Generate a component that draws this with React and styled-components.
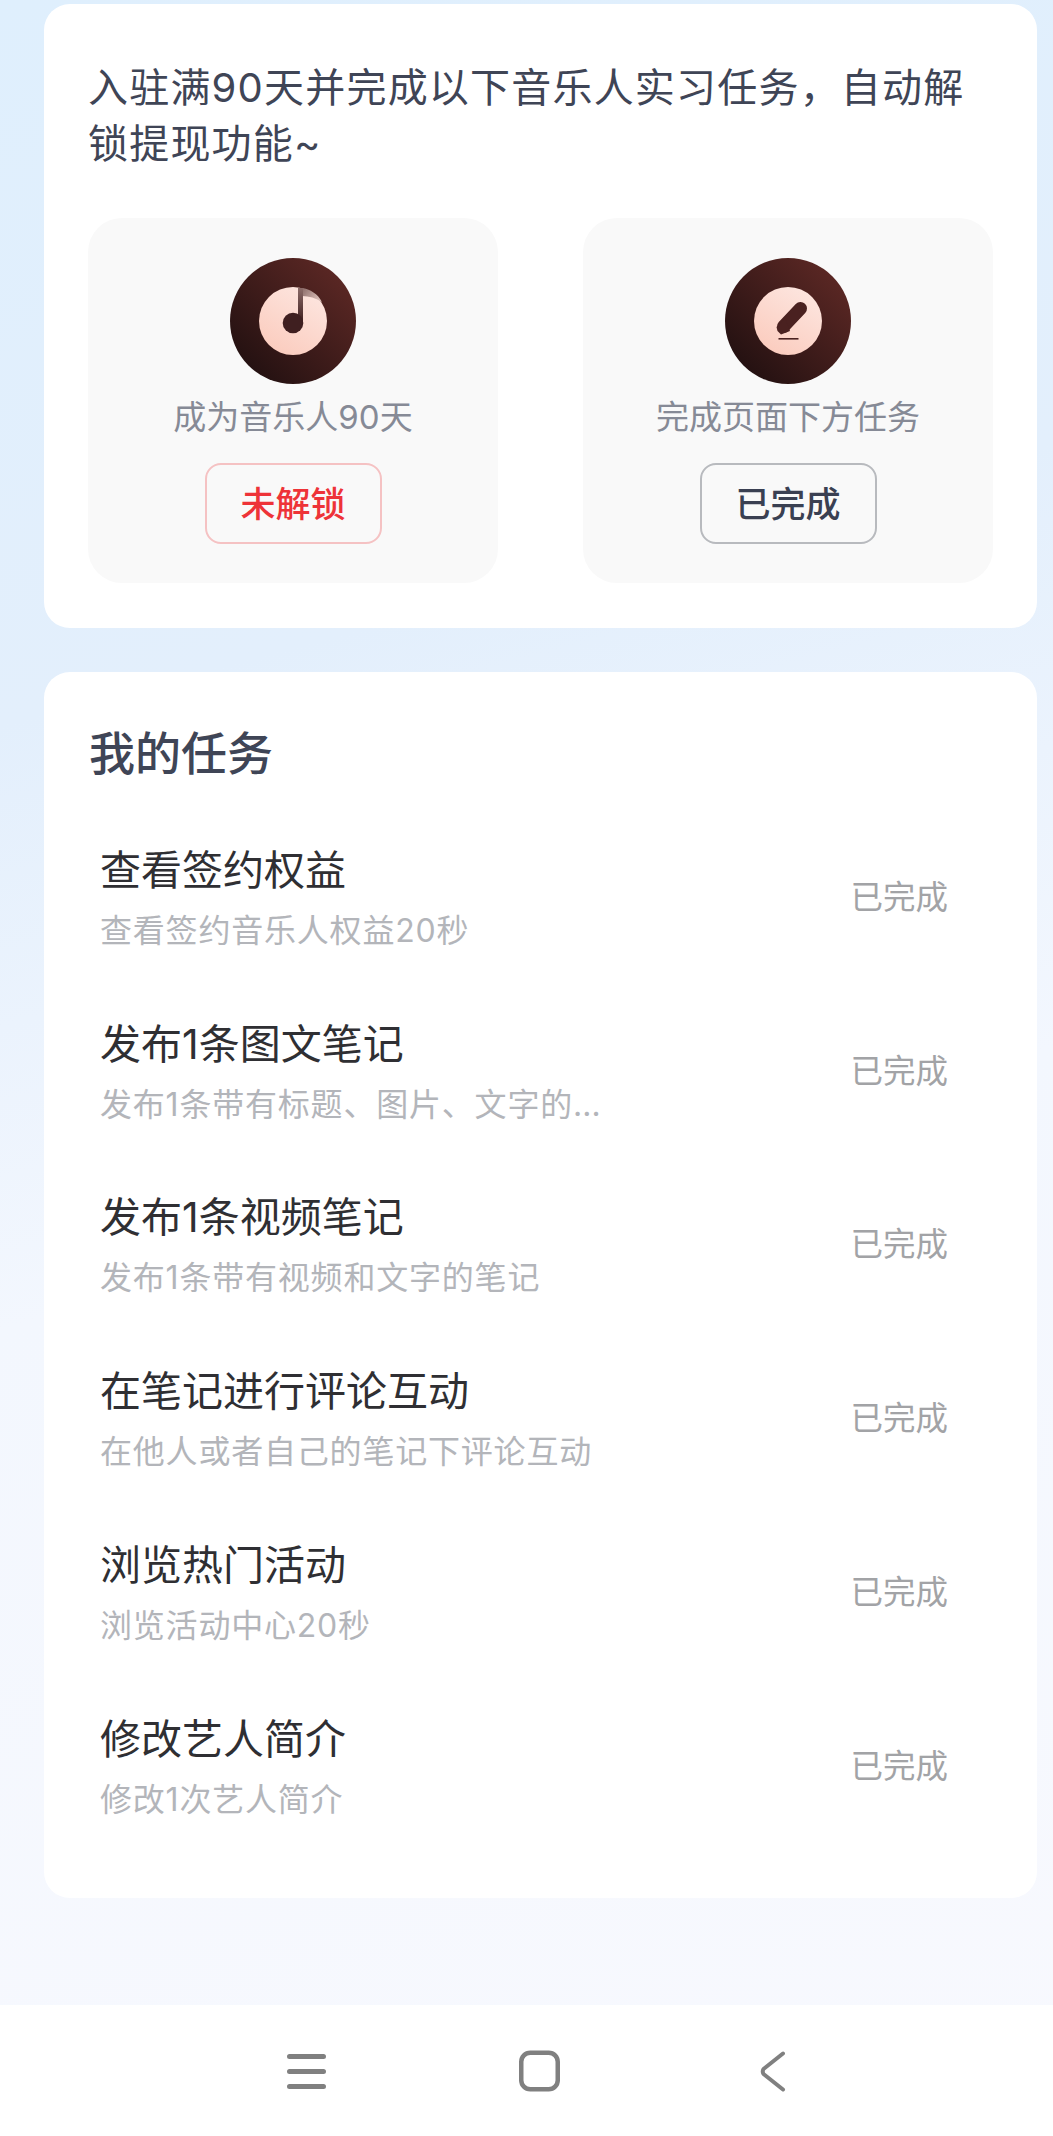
import React from "react";
import styled, { createGlobalStyle } from "styled-components";

const GlobalStyle = createGlobalStyle`
  html, body {
    margin: 0;
    padding: 0;
  }
  body {
    font-family: "Inter", "Noto Sans CJK SC", sans-serif;
  }
`;

const Page = styled.div`
  width: 1053px;
  height: 2136px;
  display: flex;
  flex-direction: column;
  overflow: hidden;
  background: linear-gradient(165deg, #dfeffd 0%, #e3effc 30%, #f3f7fe 55%, #f8f9fe 100%);
`;

const Content = styled.main`
  flex: 1;
  display: flex;
  flex-direction: column;
  gap: 44px;
  padding: 4px 16px 0 44px;
`;

const Card = styled.section`
  background: #ffffff;
  border-radius: 26px;
`;

const IntroCard = styled(Card)`
  padding: 56px 44px 45px;
`;

const IntroText = styled.p`
  margin: 0 0 46px;
  font-size: 40px;
  line-height: 56px;
  letter-spacing: 1.2px;
  color: #3f4556;
`;

const Tiles = styled.div`
  display: flex;
  justify-content: space-between;
`;

const Tile = styled.div`
  width: 410px;
  height: 365px;
  box-sizing: border-box;
  padding-top: 40px;
  display: flex;
  flex-direction: column;
  align-items: center;
  background: #f9f9f9;
  border-radius: 34px;
`;

const TileIcon = styled.svg`
  width: 126px;
  height: 126px;
  display: block;
`;

const Caption = styled.div`
  margin-top: 13px;
  font-size: 33px;
  line-height: 40px;
  color: #868a96;
`;

const StatusButton = styled.div`
  margin-top: 26px;
  width: 177px;
  height: 81px;
  box-sizing: border-box;
  padding-bottom: 4px;
  display: flex;
  align-items: center;
  justify-content: center;
  border-radius: 16px;
  border: 2px solid ${(p) => (p.$locked ? "#f5c2c3" : "#b8babe")};
  color: ${(p) => (p.$locked ? "#ee3338" : "#3a4052")};
  font-size: 35px;
  font-weight: 500;
`;

const TaskCard = styled(Card)`
  padding: 53px 46px 44px;
`;

const SectionTitle = styled.h2`
  margin: 0 0 30px -1px;
  font-size: 46px;
  line-height: 56px;
  font-weight: 500;
  color: #3f4556;
`;

const TaskRow = styled.div`
  height: 173.8px;
  display: flex;
  align-items: center;
  justify-content: space-between;
  padding: 0 43px 0 10px;
`;

const TaskInfo = styled.div`
  display: flex;
  flex-direction: column;
  gap: 14px;
`;

const TaskName = styled.div`
  font-size: 41px;
  line-height: 52px;
  color: #2f2f33;
`;

const TaskDesc = styled.div`
  max-width: 530px;
  font-size: 32px;
  line-height: 42px;
  letter-spacing: 0.8px;
  color: #b3b5ba;
  white-space: nowrap;
  overflow: hidden;
  text-overflow: ellipsis;
`;

const TaskStatus = styled.div`
  font-size: 32.5px;
  line-height: 42px;
  color: #a2a3a6;
`;

const NavBar = styled.nav`
  height: 131px;
  flex-shrink: 0;
  box-sizing: border-box;
  padding-left: 26px;
  background: #ffffff;
  display: flex;
  align-items: center;
  justify-content: center;
  gap: 173.5px;
`;

const NavIcon = styled.svg`
  width: 60px;
  height: 60px;
  display: block;
  fill: none;
  stroke: #808080;
  stroke-linecap: round;
  stroke-linejoin: round;
`;

const IconBase = ({ id, children }) => (
  <TileIcon viewBox="0 0 126 126">
    <defs>
      <linearGradient id={`${id}-ring`} x1="1" y1="0" x2="0" y2="1">
        <stop offset="0" stopColor="#642b27" />
        <stop offset="1" stopColor="#1a0d0e" />
      </linearGradient>
      <linearGradient id={`${id}-disc`} x1="0.8" y1="0" x2="0.2" y2="1">
        <stop offset="0" stopColor="#fde6e0" />
        <stop offset="1" stopColor="#fbcbbd" />
      </linearGradient>
    </defs>
    <circle cx="63" cy="63" r="63" fill={`url(#${id}-ring)`} />
    <circle cx="63" cy="63" r="34" fill={`url(#${id}-disc)`} />
    {children}
  </TileIcon>
);

const NoteIcon = () => (
  <IconBase id="note">
    <defs>
      <linearGradient id="note-stem" x1="0" y1="0" x2="0" y2="1">
        <stop offset="0" stopColor="#8b6b68" />
        <stop offset="1" stopColor="#3d1c1c" />
      </linearGradient>
      <linearGradient id="note-flag" x1="0" y1="0" x2="1" y2="0.5">
        <stop offset="0" stopColor="#8b6b68" />
        <stop offset="1" stopColor="#d9bdb6" />
      </linearGradient>
    </defs>
    <path d="M72 30 C80 31 88 36 92 44 C86 40 79 38 72 38 Z" fill="url(#note-flag)" />
    <path d="M68 30 H73 V65 H68 Z" fill="url(#note-stem)" />
    <circle cx="63" cy="65" r="10.3" fill="#3f1f20" />
  </IconBase>
);

const PenIcon = () => (
  <IconBase id="pen">
    <path d="M75.5 50.5 L58.5 68.5" stroke="#4a2120" strokeWidth="13" strokeLinecap="round" />
    <path d="M51.5 69 L60 60 L65 73 L56 76.5 L52.5 73 Z" fill="#4a2120" />
    <path d="M53.5 80.8 H73.5" stroke="#4a2120" strokeWidth="1.6" />
  </IconBase>
);

const tasks = [
  { name: "查看签约权益", desc: "查看签约音乐人权益20秒" },
  { name: "发布1条图文笔记", desc: "发布1条带有标题、图片、文字的图文笔记" },
  { name: "发布1条视频笔记", desc: "发布1条带有视频和文字的笔记" },
  { name: "在笔记进行评论互动", desc: "在他人或者自己的笔记下评论互动" },
  { name: "浏览热门活动", desc: "浏览活动中心20秒" },
  { name: "修改艺人简介", desc: "修改1次艺人简介" },
];

export default function App() {
  return (
    <Page>
      <GlobalStyle />
      <Content>
        <IntroCard>
          <IntroText>入驻满90天并完成以下音乐人实习任务，自动解锁提现功能~</IntroText>
          <Tiles>
            <Tile>
              <NoteIcon />
              <Caption>成为音乐人90天</Caption>
              <StatusButton $locked>未解锁</StatusButton>
            </Tile>
            <Tile>
              <PenIcon />
              <Caption>完成页面下方任务</Caption>
              <StatusButton>已完成</StatusButton>
            </Tile>
          </Tiles>
        </IntroCard>
        <TaskCard>
          <SectionTitle>我的任务</SectionTitle>
          {tasks.map((task) => (
            <TaskRow key={task.name}>
              <TaskInfo>
                <TaskName>{task.name}</TaskName>
                <TaskDesc>{task.desc}</TaskDesc>
              </TaskInfo>
              <TaskStatus>已完成</TaskStatus>
            </TaskRow>
          ))}
        </TaskCard>
      </Content>
      <NavBar>
        <NavIcon viewBox="0 0 60 60" strokeWidth="5">
          <path d="M13.5 15.5 H47.5 M13.5 30.5 H47.5 M13.5 45.5 H47.5" />
        </NavIcon>
        <NavIcon viewBox="0 0 60 60" strokeWidth="4.5">
          <rect x="11.25" y="11.75" width="36.5" height="36.5" rx="9" />
        </NavIcon>
        <NavIcon viewBox="0 0 60 60" strokeWidth="4">
          <path d="M40 12.5 L20.5 28 Q19 30.5 20.5 33 L40 48.5" />
        </NavIcon>
      </NavBar>
    </Page>
  );
}
